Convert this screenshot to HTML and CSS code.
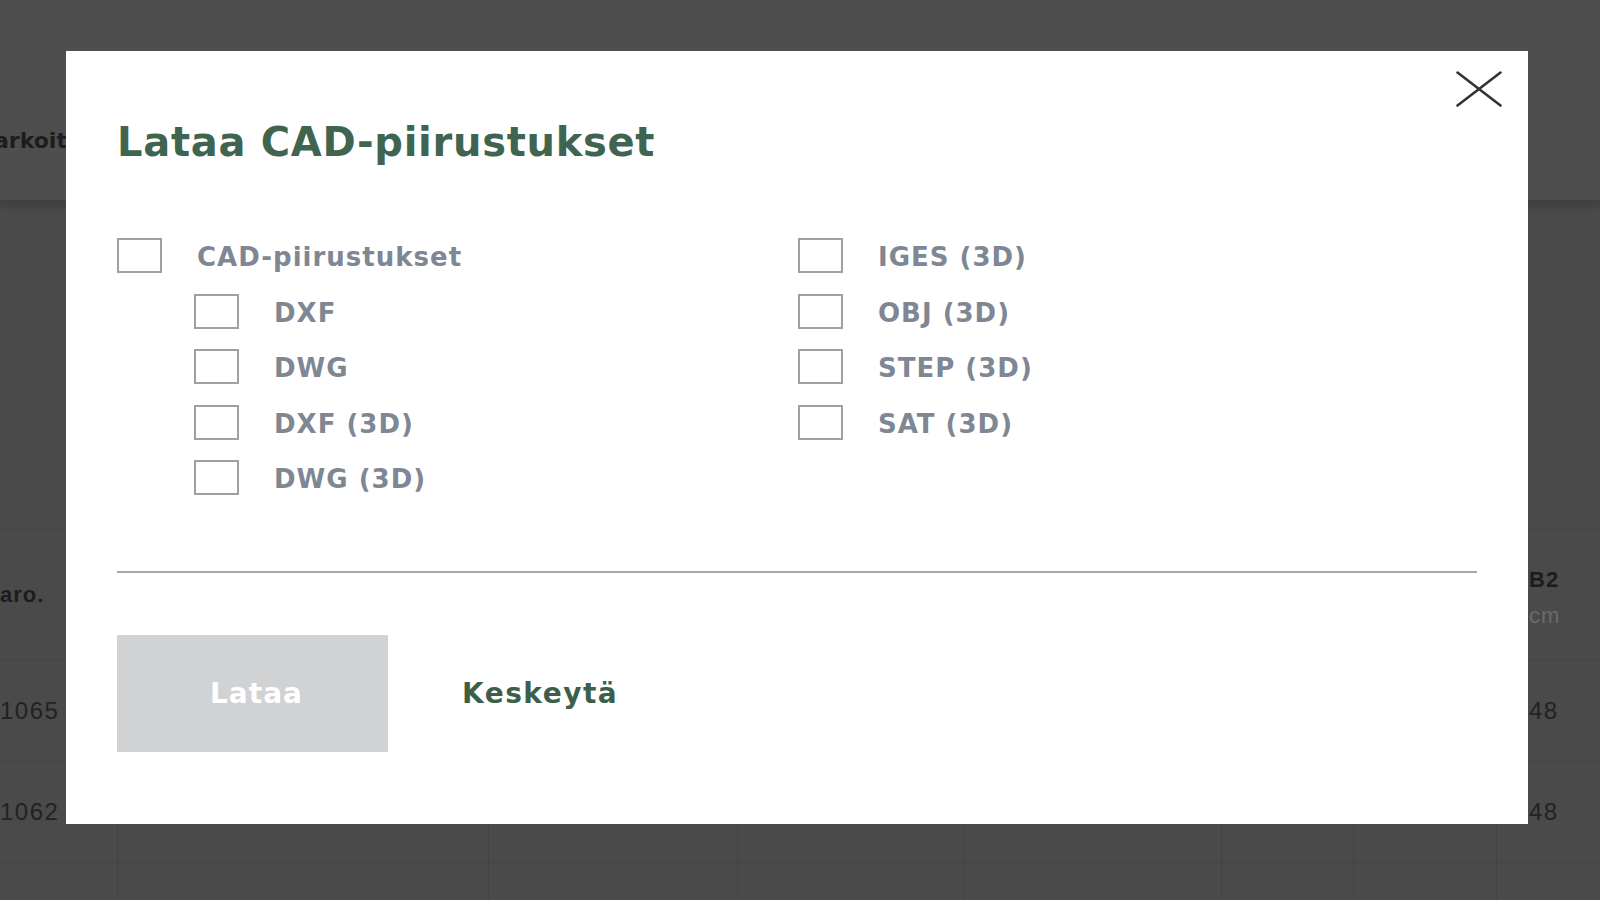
FILE: index.html
```html
<!DOCTYPE html>
<html lang="fi">
<head>
<meta charset="utf-8">
<title>Lataa CAD-piirustukset</title>
<link rel="stylesheet" href="styles.css">
</head>
<body>
<div class="backdrop-page">
  <header class="page-header">
    <span class="page-header-text">arkoitus</span>
  </header>
  <div class="table">
    <div class="table-row head-row">
      <div class="cell first"><span class="th">aro.</span></div>
      <div class="cell"></div>
      <div class="cell"></div>
      <div class="cell"></div>
      <div class="cell"></div>
      <div class="cell"></div>
      <div class="cell"></div>
      <div class="cell last"><span class="th">B2</span><span class="unit">cm</span></div>
    </div>
    <div class="table-row body-row">
      <div class="cell first"><span class="td">1065</span></div>
      <div class="cell"></div>
      <div class="cell"></div>
      <div class="cell"></div>
      <div class="cell"></div>
      <div class="cell"></div>
      <div class="cell"></div>
      <div class="cell last"><span class="td">48</span></div>
    </div>
    <div class="table-row body-row">
      <div class="cell first"><span class="td">1062</span></div>
      <div class="cell"></div>
      <div class="cell"></div>
      <div class="cell"></div>
      <div class="cell"></div>
      <div class="cell"></div>
      <div class="cell"></div>
      <div class="cell last"><span class="td">48</span></div>
    </div>
    <div class="table-row body-row short">
      <div class="cell first"></div>
      <div class="cell"></div>
      <div class="cell"></div>
      <div class="cell"></div>
      <div class="cell"></div>
      <div class="cell"></div>
      <div class="cell"></div>
      <div class="cell last"></div>
    </div>
  </div>
</div>

<div class="modal" role="dialog" aria-labelledby="modal-title">
  <button class="modal-close" type="button" aria-label="Sulje">
    <svg width="46" height="36" viewBox="0 0 46 36" aria-hidden="true">
      <path d="M1.5 1.5 L44.5 34.5 M44.5 1.5 L1.5 34.5" stroke="#333" stroke-width="2.6" fill="none" stroke-linecap="round"/>
    </svg>
  </button>
  <h2 class="modal-title" id="modal-title">Lataa CAD-piirustukset</h2>
  <div class="options">
    <ul class="option-col">
      <li class="option"><span class="box"></span><span class="option-label">CAD-piirustukset</span></li>
      <li class="option sub"><span class="box"></span><span class="option-label">DXF</span></li>
      <li class="option sub"><span class="box"></span><span class="option-label">DWG</span></li>
      <li class="option sub"><span class="box"></span><span class="option-label">DXF (3D)</span></li>
      <li class="option sub"><span class="box"></span><span class="option-label">DWG (3D)</span></li>
    </ul>
    <ul class="option-col">
      <li class="option"><span class="box"></span><span class="option-label">IGES (3D)</span></li>
      <li class="option"><span class="box"></span><span class="option-label">OBJ (3D)</span></li>
      <li class="option"><span class="box"></span><span class="option-label">STEP (3D)</span></li>
      <li class="option"><span class="box"></span><span class="option-label">SAT (3D)</span></li>
    </ul>
  </div>
  <hr class="divider">
  <div class="actions">
    <button class="btn-primary" type="button" disabled>Lataa</button>
    <button class="btn-link" type="button">Keskeytä</button>
  </div>
</div>
</body>
</html>
```
FILE: styles.css
```css
* { box-sizing: border-box; }

html, body {
  margin: 0;
  padding: 0;
}

body {
  width: 1600px;
  height: 900px;
  overflow: hidden;
  background: #4a4a4a;
  font-family: "Liberation Sans", Arial, sans-serif;
}

/* dimmed page behind the dialog */
.backdrop-page {
  width: 1600px;
}

.page-header {
  height: 200px;
  background: #4e4e4e;
  padding-top: 127px;
  box-shadow: 0 4px 0 #414141, 0 8px 4px rgba(0, 0, 0, 0.12);
  position: relative;
}

.page-header-text {
  display: block;
  margin-left: -6px;
  font-family: "DejaVu Sans", "Liberation Sans", sans-serif;
  font-size: 22px;
  line-height: 28px;
  font-weight: bold;
  color: #1d1d1d;
}

.table {
  margin-top: 329px;
}

.table-row {
  display: grid;
  grid-template-columns: 117px 371px 249px 226px 258px 132px 143px 1fr;
  border-top: 1px solid #434343;
}

.head-row { height: 131px; }
.body-row { height: 101px; }
.body-row.short { height: 60px; }

.cell {
  border-left: 1px solid #434343;
  display: flex;
  flex-direction: column;
  justify-content: center;
}

.cell.first {
  border-left: none;
}

.cell.last {
  padding-left: 32px;
}

.th {
  font-size: 22px;
  font-weight: bold;
  color: #1c1c1c;
  line-height: 36px;
  letter-spacing: 1px;
}

.head-row .cell.last {
  padding-top: 6px;
}

.unit {
  font-size: 22px;
  line-height: 36px;
  color: #6a6a6a;
  letter-spacing: 1px;
}

.td {
  font-size: 24px;
  color: #222222;
  letter-spacing: 1.5px;
}

/* dialog */
.modal {
  position: fixed;
  top: 51px;
  left: 66px;
  width: 1462px;
  height: 773px;
  background: #ffffff;
  padding: 67px 51px 0 51px;
}

.modal-close {
  position: absolute;
  top: 20px;
  right: 26px;
  width: 46px;
  height: 36px;
  padding: 0;
  border: none;
  background: none;
  cursor: pointer;
}

.modal-close svg {
  display: block;
}

.modal-title {
  margin: 0;
  font-family: "DejaVu Sans", "Liberation Sans", sans-serif;
  font-weight: bold;
  font-size: 40px;
  line-height: 48px;
  letter-spacing: 0.7px;
  color: #3f6450;
}

.options {
  margin-top: 72px;
  display: grid;
  grid-template-columns: 681px 1fr;
}

.option-col {
  list-style: none;
  margin: 0;
  padding: 0;
  display: flex;
  flex-direction: column;
  gap: 20.5px;
}

.option {
  height: 35px;
  display: flex;
  align-items: center;
}

.option.sub {
  padding-left: 77px;
}

.box {
  flex: none;
  width: 45px;
  height: 35px;
  border: 2px solid #a0a0a0;
  margin-right: 35px;
  background: #fff;
}

.option-label {
  font-family: "DejaVu Sans", "Liberation Sans", sans-serif;
  font-weight: bold;
  font-size: 26px;
  letter-spacing: 1px;
  color: #7e8793;
  white-space: nowrap;
  padding-top: 3px;
}

.divider {
  margin: 76px 0 0 0;
  height: 2px;
  border: none;
  background: #a9a9a9;
}

.actions {
  margin-top: 62px;
  display: flex;
  align-items: center;
}

.btn-primary {
  width: 271px;
  height: 117px;
  border: none;
  background: #d1d2d4;
  color: #ffffff;
  font-family: "DejaVu Sans", "Liberation Sans", sans-serif;
  font-weight: bold;
  font-size: 28px;
  letter-spacing: 1px;
  padding: 0 0 0 8px;
}

.btn-link {
  margin-left: 74px;
  border: none;
  background: none;
  padding: 0;
  color: #3d5f4a;
  font-family: "DejaVu Sans", "Liberation Sans", sans-serif;
  font-weight: bold;
  font-size: 28px;
  letter-spacing: 1.5px;
  cursor: pointer;
}
```
